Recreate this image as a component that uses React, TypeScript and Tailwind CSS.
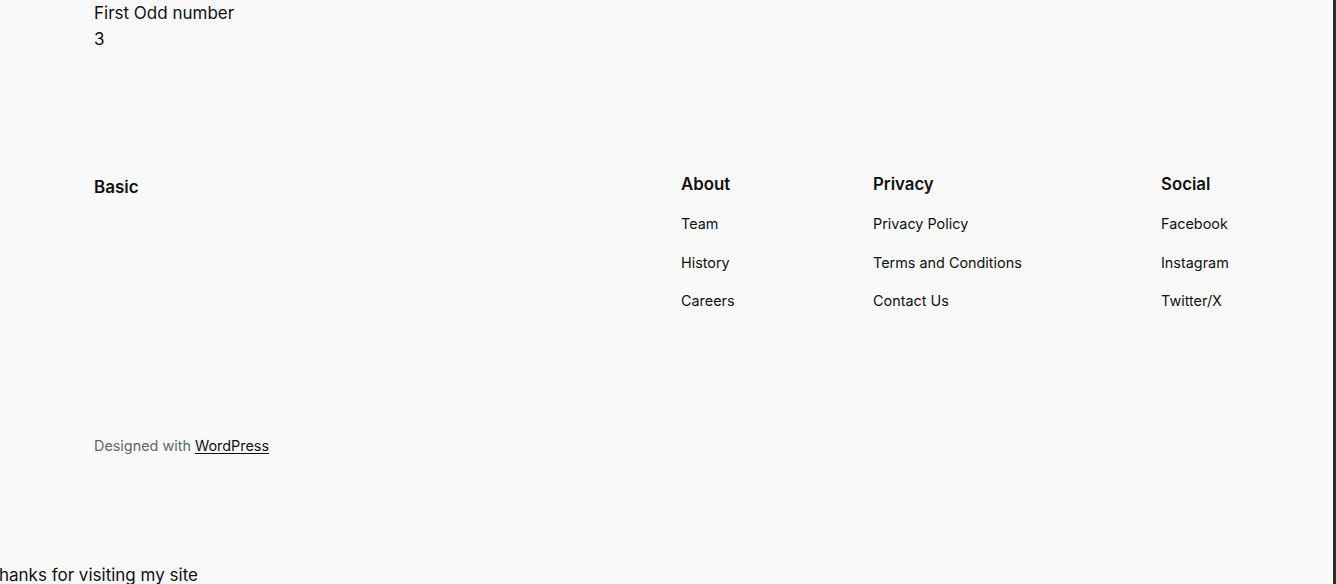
import React from "react";

const columns = [
  { title: "About", width: "w-[192px]", links: ["Team", "History", "Careers"] },
  {
    title: "Privacy",
    width: "w-[288px]",
    links: ["Privacy Policy", "Terms and Conditions", "Contact Us"],
  },
  { title: "Social", width: "w-auto", links: ["Facebook", "Instagram", "Twitter/X"] },
];

const App = () => {
  return (
    <div
      className="w-[1336px] h-[584px] overflow-hidden bg-[#f9f9f9] text-[#111111] border-r-[3px] border-[#2b2b2b]"
      style={{ fontFamily: "Inter, 'Noto Sans', sans-serif" }}
    >
      <div className="pl-[94px] text-[17px] leading-[26px]">
        <p>First Odd number</p>
        <p>3</p>
      </div>

      <footer className="pl-[94px] mt-[120px]">
        <div className="flex">
          <div className="w-[587px] pt-[3px]">
            <h2 className="text-[17px] leading-[24px] font-semibold">Basic</h2>
          </div>
          {columns.map((col) => (
            <div key={col.title} className={col.width}>
              <h3 className="text-[16.8px] leading-[24px] font-semibold">
                {col.title}
              </h3>
              <ul className="mt-[18px] flex flex-col gap-[18.5px] text-[14.4px] leading-[20px]">
                {col.links.map((link) => (
                  <li key={link}>
                    <a className="cursor-pointer">{link}</a>
                  </li>
                ))}
              </ul>
            </div>
          ))}
        </div>

        <p className="mt-[125px] text-[14.4px] leading-[20px] text-[#666666]">
          Designed with{" "}
          <a className="text-[#111111] underline underline-offset-2 cursor-pointer">
            WordPress
          </a>
        </p>
      </footer>

      <p className="-ml-[12px] mt-[106px] text-[17px] leading-[26px]">
        Thanks for visiting my site
      </p>
    </div>
  );
};

export default App;
